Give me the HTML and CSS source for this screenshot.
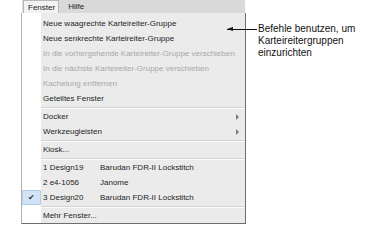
FILE: index.html
```
<!DOCTYPE html>
<html>
<head>
<meta charset="utf-8">
<link rel="stylesheet" href="styles.css">
</head>
<body>
<div class="page">
  <div class="window">
    <div class="menubar">
      <span class="tab active">Fenster</span>
      <span class="tab">Hilfe</span>
    </div>
    <div class="menu">
      <div class="item"><span class="gutter"></span><span class="label">Neue waagrechte Karteireiter-Gruppe</span></div>
      <div class="item"><span class="gutter"></span><span class="label">Neue senkrechte Karteireiter-Gruppe</span></div>
      <div class="item disabled"><span class="gutter"></span><span class="label">In die vorhergehende Karteireiter-Gruppe verschieben</span></div>
      <div class="item disabled"><span class="gutter"></span><span class="label">In die nächste Karteireiter-Gruppe verschieben</span></div>
      <div class="item disabled"><span class="gutter"></span><span class="label">Kachelung entfernen</span></div>
      <div class="item"><span class="gutter"></span><span class="label">Geteiltes Fenster</span></div>
      <div class="sep"></div>
      <div class="item"><span class="gutter"></span><span class="label">Docker</span><span class="arrow"></span></div>
      <div class="item"><span class="gutter"></span><span class="label">Werkzeugleisten</span><span class="arrow"></span></div>
      <div class="sep"></div>
      <div class="item"><span class="gutter"></span><span class="label">Kiosk...</span></div>
      <div class="sep"></div>
      <div class="item"><span class="gutter"></span><span class="label name">1 Design19</span><span class="label">Barudan FDR-II Lockstitch</span></div>
      <div class="item"><span class="gutter"></span><span class="label name">2 e4-1056</span><span class="label">Janome</span></div>
      <div class="item"><span class="gutter checked">&#10004;</span><span class="label name">3 Design20</span><span class="label">Barudan FDR-II Lockstitch</span></div>
      <div class="sep"></div>
      <div class="item"><span class="gutter"></span><span class="label">Mehr Fenster...</span></div>
    </div>
  </div>
  <div class="callout">
    <div class="pointer"><span class="head"></span></div>
    <p class="note">Befehle benutzen, um<br>Karteireitergruppen<br>einzurichten</p>
  </div>
</div>
</body>
</html>
```
FILE: styles.css
```
html, body {
  margin: 0;
  padding: 0;
  background: #fff;
}
.page {
  position: relative;
  width: 374px;
  height: 241px;
  overflow: hidden;
  font-family: "Liberation Sans", Arial, sans-serif;
}
.window {
  margin-left: 21px;
  width: 225px;
}
.menubar {
  display: flex;
  height: 13px;
  margin-left: 1px;
  width: 223px;
  background: #d9d9d9;
  font-size: 8px;
  color: #222;
}
.tab {
  display: flex;
  align-items: center;
  height: 13px;
  box-sizing: border-box;
  white-space: nowrap;
}
.tab.active {
  margin-left: 1px;
  padding: 0 3px 0 4px;
  background: #f2f2f2;
  border: 1px solid #b8b8b8;
  border-bottom: none;
}
.tab + .tab {
  padding-left: 9px;
}
.menu {
  border: 1px solid #b0b0b0;
  border-right-color: #6e6e6e;
  border-bottom-color: #6e6e6e;
  border-top: none;
  padding-top: 3px;
  height: 211px;
  box-sizing: border-box;
  background: linear-gradient(to right, #fff 19px, #ebebeb 19px);
  font-size: 8px;
  color: #1e1e1e;
}
.item {
  display: flex;
  align-items: center;
  height: 15px;
}
.item.disabled {
  color: #a8a8a8;
}
.gutter {
  width: 19px;
  height: 15px;
  flex: none;
  box-sizing: border-box;
}
.gutter.checked {
  background: #d3e3f6;
  border: 1px solid #b4cdeb;
  color: #2a3a55;
  font-size: 8px;
  display: flex;
  align-items: center;
  justify-content: center;
}
.label {
  padding-left: 2px;
  white-space: nowrap;
}
.label.name {
  width: 55px;
  flex: none;
}
.arrow {
  margin-left: auto;
  margin-right: 6px;
  width: 0;
  height: 0;
  border-top: 3px solid transparent;
  border-bottom: 3px solid transparent;
  border-left: 3px solid #7a7a7a;
}
.sep {
  height: 3px;
  margin-left: 19px;
  display: flex;
  flex-direction: column;
  justify-content: center;
}
.sep::before {
  content: "";
  height: 1px;
  background: #d4d4d4;
  border-bottom: 1px solid #fbfbfb;
}
.callout {
  position: absolute;
  left: 227px;
  top: 23px;
  display: flex;
  align-items: flex-start;
}
.pointer {
  position: relative;
  width: 30px;
  height: 1px;
  margin-top: 6px;
  background: #111;
}
.head {
  position: absolute;
  left: 0;
  top: -2px;
  width: 0;
  height: 0;
  border-top: 2.5px solid transparent;
  border-bottom: 2.5px solid transparent;
  border-right: 6px solid #111;
}
.note {
  margin: 0 0 0 1px;
  font-size: 10px;
  line-height: 12px;
  color: #111;
}
```
